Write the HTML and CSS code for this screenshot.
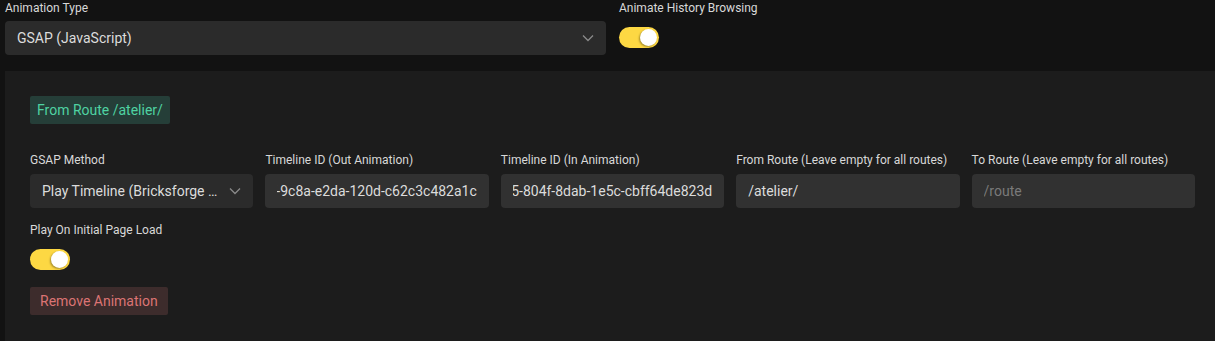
FILE: index.html
```html
<!DOCTYPE html>
<html lang="en">
<head>
    <meta charset="UTF-8">
    <title>Animation Settings</title>
    <link rel="stylesheet" href="styles.css">
</head>
<body>

    <!-- Top settings row -->
    <div class="top-row">
        <div class="field field-type">
            <div class="field-label">Animation Type</div>
            <div class="control select">
                <span>GSAP (JavaScript)</span>
                <svg class="chevron" width="12" height="8" viewBox="0 0 12 8"><path d="M1 1.5 L6 6.5 L11 1.5" fill="none" stroke="#8a8a8a" stroke-width="1.3"/></svg>
            </div>
        </div>
        <div class="field">
            <div class="field-label">Animate History Browsing</div>
            <div class="toggle"><span class="knob"></span></div>
        </div>
    </div>

    <!-- Animation item -->
    <div class="panel">
        <div class="badge">From Route /atelier/</div>

        <div class="field-grid">
            <div class="field">
                <div class="field-label">GSAP Method</div>
                <div class="control select">
                    <span class="ellipsis">Play Timeline (Bricksforge Panel)</span>
                    <svg class="chevron" width="12" height="8" viewBox="0 0 12 8"><path d="M1 1.5 L6 6.5 L11 1.5" fill="none" stroke="#8a8a8a" stroke-width="1.3"/></svg>
                </div>
            </div>
            <div class="field">
                <div class="field-label">Timeline ID (Out Animation)</div>
                <div class="control input">
                    <div class="value scrolled"><span>5c1a0e3f-9c8a-e2da-120d-c62c3c482a1c</span></div>
                </div>
            </div>
            <div class="field">
                <div class="field-label">Timeline ID (In Animation)</div>
                <div class="control input">
                    <div class="value scrolled"><span>b7e40a35-804f-8dab-1e5c-cbff64de823d</span></div>
                </div>
            </div>
            <div class="field">
                <div class="field-label">From Route (Leave empty for all routes)</div>
                <div class="control input"><div class="value">/atelier/</div></div>
            </div>
            <div class="field">
                <div class="field-label">To Route (Leave empty for all routes)</div>
                <div class="control input placeholder"><div class="value">/route</div></div>
            </div>
        </div>

        <div class="field">
            <div class="field-label">Play On Initial Page Load</div>
            <div class="toggle"><span class="knob"></span></div>
        </div>

        <div class="button-danger">Remove Animation</div>
    </div>

</body>
</html>
```

FILE: styles.css
```css
body {
    margin: 0;
    background-color: #121212;
    font-family: Roboto, "Liberation Sans", sans-serif;
    color: #dcdcdc;
    overflow: hidden;
}
.top-row {
    display: flex;
    gap: 13px;
    padding: 0 5px;
}
.field {
    min-width: 0;
}
.field-type {
    width: 601px;
}
.field-label {
    font-size: 12px;
    line-height: 14px;
    color: #d8d8d8;
    padding-top: 1px;
    margin-bottom: 6px;
    white-space: nowrap;
}
.control {
    height: 34px;
    border-radius: 4px;
    background-color: #2b2b2b;
    display: flex;
    align-items: center;
    padding: 0 12px;
    box-sizing: border-box;
    font-size: 14px;
    color: #dcdcdc;
    overflow: hidden;
    white-space: nowrap;
}
.select {
    justify-content: space-between;
}
.chevron {
    flex-shrink: 0;
    margin-left: 4px;
}
.ellipsis {
    overflow: hidden;
    text-overflow: ellipsis;
}
.input {
    background-color: #313131;
}
.value {
    flex: 1;
    min-width: 0;
    overflow: hidden;
}
.scrolled {
    display: flex;
    justify-content: flex-end;
}
.scrolled span {
    flex-shrink: 0;
}
.placeholder {
    color: #7a7a7a;
}
.toggle {
    width: 40px;
    height: 21px;
    border-radius: 11px;
    background-color: #fdd843;
    position: relative;
    margin-top: 12px;
}
.knob {
    position: absolute;
    right: 2px;
    top: 2px;
    width: 17px;
    height: 17px;
    border-radius: 50%;
    background-color: #ffffff;
    box-shadow: -1px 1px 2px rgba(0, 0, 0, 0.35);
}
.panel {
    margin: 16px 0 0 5px;
    background-color: #1c1c1c;
    padding: 25px 20px 30px 25px;
    height: 271px;
    box-sizing: border-box;
}
.badge {
    display: inline-block;
    background-color: #253e38;
    color: #4fd2a2;
    font-size: 14px;
    line-height: 28px;
    padding: 0 7px;
    border-radius: 2px;
}
.field-grid {
    display: grid;
    grid-template-columns: repeat(5, minmax(0, 1fr));
    gap: 12px;
    margin-top: 28px;
    margin-bottom: 14px;
}
.panel .field-label {
    margin-bottom: 7px;
}
.button-danger {
    display: inline-block;
    margin-top: 17px;
    background-color: #3d2c2c;
    color: #dc7474;
    font-size: 14px;
    line-height: 28px;
    padding: 0 10px;
    border-radius: 2px;
}
```
